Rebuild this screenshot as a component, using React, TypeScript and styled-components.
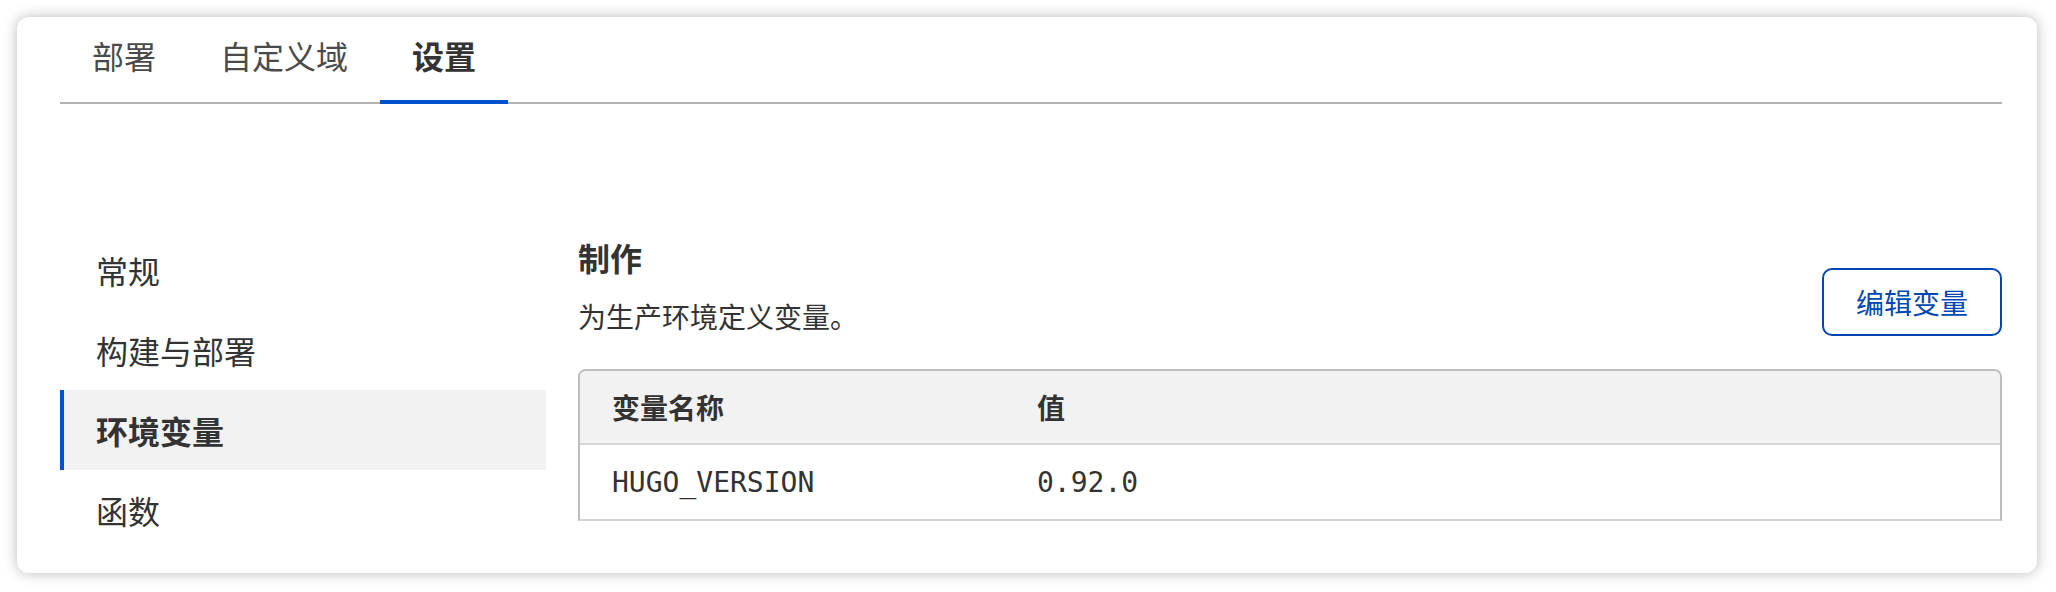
import React from "react";
import styled, { createGlobalStyle } from "styled-components";

const GlobalStyle = createGlobalStyle`
  html, body {
    margin: 0;
    padding: 0;
    background: #ffffff;
  }
  body {
    font-family: "Noto Sans CJK SC", "Noto Sans", sans-serif;
    color: #333333;
  }
  * { box-sizing: border-box; }
`;

const Page = styled.div`
  padding: 17px 19px 17px 17px;
`;

const Card = styled.div`
  background: #ffffff;
  border-radius: 12px;
  box-shadow: 0 0 14px rgba(0, 0, 0, 0.28);
  padding: 0 35px 23px 43px;
`;

const TabBar = styled.nav`
  display: flex;
  border-bottom: 2px solid #b3b3b3;
`;

const Tab = styled.div<{ $active?: boolean }>`
  padding: 14px 32px 21px;
  margin-bottom: -2px;
  font-size: 32px;
  line-height: 48px;
  font-weight: ${(p) => (p.$active ? 700 : 400)};
  color: ${(p) => (p.$active ? "#333333" : "#4a4a4a")};
  border-bottom: 4px solid ${(p) => (p.$active ? "#0052cc" : "transparent")};
  white-space: nowrap;
`;

const Body = styled.div`
  display: flex;
  align-items: flex-start;
  gap: 32px;
  margin-top: 129px;
`;

const Sidebar = styled.ul`
  width: 486px;
  flex: none;
  list-style: none;
  margin: -3px 0 0;
  padding: 0;
`;

const NavItem = styled.li<{ $active?: boolean }>`
  height: 80px;
  display: flex;
  align-items: center;
  padding-left: 32px;
  border-left: 4px solid ${(p) => (p.$active ? "#0052cc" : "transparent")};
  background: ${(p) => (p.$active ? "#f2f2f2" : "transparent")};
  font-size: 32px;
  font-weight: ${(p) => (p.$active ? 700 : 400)};
  color: #333333;
`;

const Main = styled.section`
  flex: 1;
  min-width: 0;
`;

const HeaderRow = styled.div`
  display: flex;
  justify-content: space-between;
  align-items: flex-end;
`;

const TitleBlock = styled.div`
  display: flex;
  flex-direction: column;
`;

const Title = styled.h2`
  margin: 0;
  font-size: 32px;
  line-height: 48px;
  font-weight: 700;
  color: #333333;
`;

const Desc = styled.p`
  margin: 14px 0 0;
  font-size: 28px;
  line-height: 42px;
  color: #333333;
`;

const OutlineButton = styled.button`
  height: 68px;
  padding: 0 32px;
  margin-bottom: 1px;
  border: 2px solid #0047b3;
  border-radius: 10px;
  background: #ffffff;
  color: #0047b3;
  font-family: "Noto Sans CJK SC", "Noto Sans", sans-serif;
  font-size: 28px;
  line-height: 1;
  cursor: pointer;
`;

const Table = styled.div`
  margin-top: 32px;
  border: 2px solid #bdbdbd;
  border-bottom-color: #d4d4d4;
  border-radius: 8px 8px 0 0;
  overflow: hidden;
`;

const Row = styled.div<{ $head?: boolean }>`
  display: grid;
  grid-template-columns: 425px 1fr;
  height: 74px;
  align-items: center;
  background: ${(p) => (p.$head ? "#f2f2f2" : "#ffffff")};
  border-bottom: ${(p) => (p.$head ? "2px solid #d6d6d6" : "none")};
`;

const HeadCell = styled.div`
  padding: 0 32px;
  font-size: 28px;
  font-weight: 700;
  color: #333333;
`;

const MonoCell = styled.div`
  padding: 0 32px;
  font-family: "DejaVu Sans Mono", "Liberation Mono", monospace;
  font-size: 28px;
  color: #333333;
`;

const tabs = ["部署", "自定义域", "设置"];
const navItems = ["常规", "构建与部署", "环境变量", "函数"];

export default function App() {
  return (
    <>
      <GlobalStyle />
      <Page>
        <Card>
          <TabBar>
            {tabs.map((t) => (
              <Tab key={t} $active={t === "设置"}>
                {t}
              </Tab>
            ))}
          </TabBar>
          <Body>
            <Sidebar>
              {navItems.map((n) => (
                <NavItem key={n} $active={n === "环境变量"}>
                  {n}
                </NavItem>
              ))}
            </Sidebar>
            <Main>
              <HeaderRow>
                <TitleBlock>
                  <Title>制作</Title>
                  <Desc>为生产环境定义变量。</Desc>
                </TitleBlock>
                <OutlineButton>编辑变量</OutlineButton>
              </HeaderRow>
              <Table>
                <Row $head>
                  <HeadCell>变量名称</HeadCell>
                  <HeadCell>值</HeadCell>
                </Row>
                <Row>
                  <MonoCell>HUGO_VERSION</MonoCell>
                  <MonoCell>0.92.0</MonoCell>
                </Row>
              </Table>
            </Main>
          </Body>
        </Card>
      </Page>
    </>
  );
}
